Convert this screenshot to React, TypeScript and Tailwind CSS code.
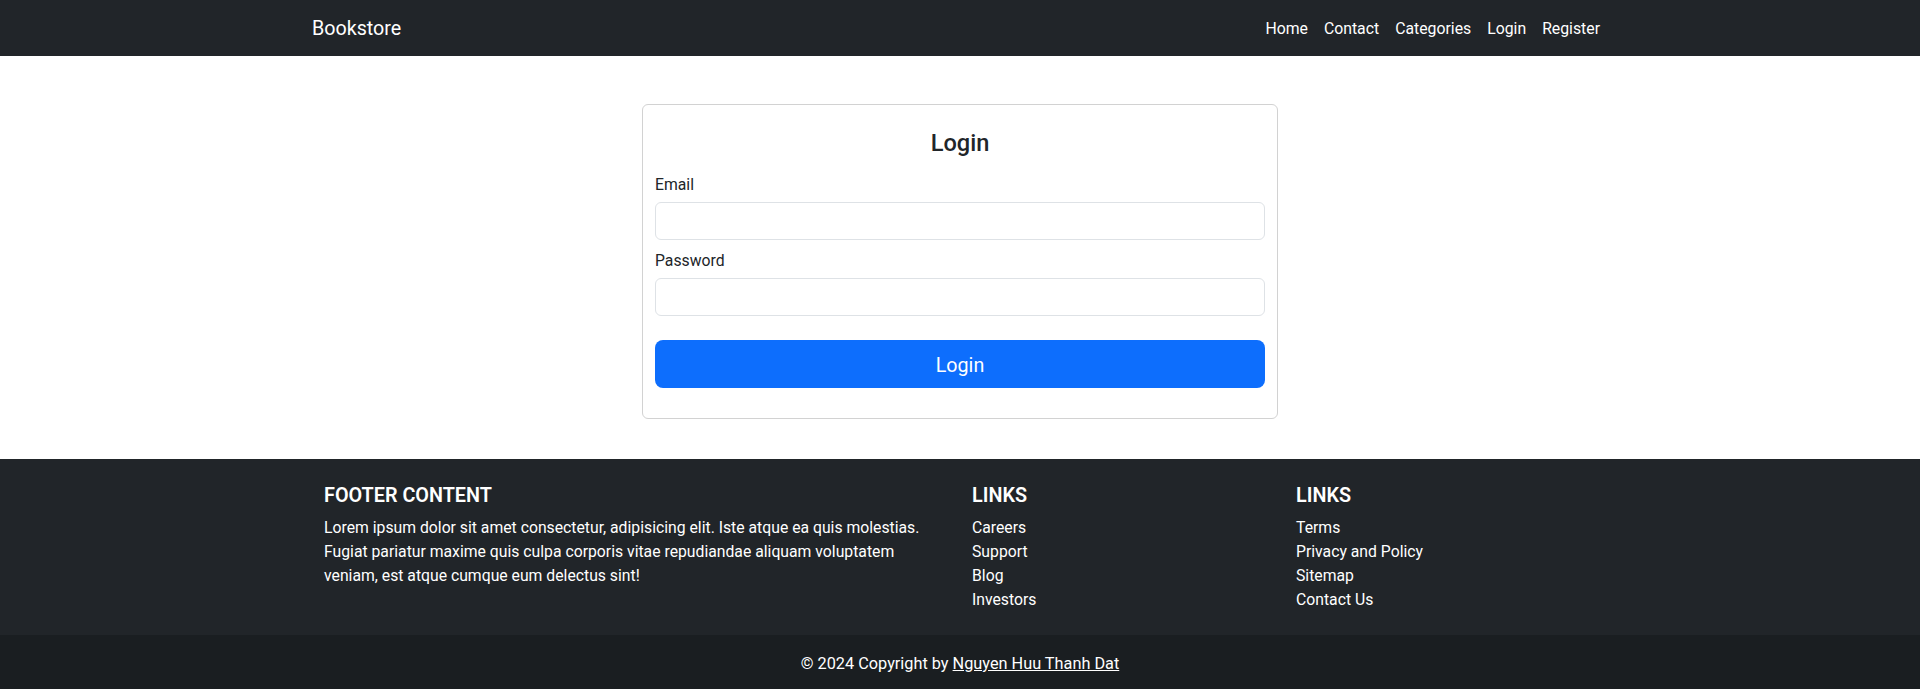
import React from "react";

const font = { fontFamily: "Roboto, 'Noto Sans', sans-serif" };

export default function App() {
  const navLinks = ["Home", "Contact", "Categories", "Login", "Register"];
  const links1 = ["Careers", "Support", "Blog", "Investors"];
  const links2 = ["Terms", "Privacy and Policy", "Sitemap", "Contact Us"];
  return (
    <div className="min-h-[689px] bg-white text-[#212529]" style={font}>
      <nav className="bg-[#212529] h-[56px]">
        <div className="w-[1320px] mx-auto px-3 pt-[2px] h-full flex items-center justify-between">
          <a className="text-white text-[19.7px] leading-[30px]">Bookstore</a>
          <ul className="flex">
            {navLinks.map((l) => (
              <li key={l}>
                <a className="block px-2 text-white text-[15.8px] leading-6">{l}</a>
              </li>
            ))}
          </ul>
        </div>
      </nav>

      <main className="w-[1320px] mx-auto px-3 pt-12 pb-10">
        <div className="mx-auto w-[636px] border border-[#d2d2d2] rounded-md px-3 pt-[24px] pb-[30px]">
          <h4 className="text-[23.6px] leading-[29px] font-medium text-center mb-[15px]">Login</h4>
          <label className="block text-[15.75px] leading-6 mb-[5px]">Email</label>
          <input
            type="email"
            className="block w-full h-[38px] border border-[#dee2e6] rounded-md px-3 outline-none"
          />
          <label className="block text-[15.75px] leading-6 mt-[9px] mb-[5px]">Password</label>
          <input
            type="password"
            className="block w-full h-[38px] border border-[#dee2e6] rounded-md px-3 outline-none"
          />
          <button className="mt-6 w-full h-[48px] pt-[4px] bg-[#0d6efd] text-white text-[19.7px] leading-[30px] rounded-lg">
            Login
          </button>
        </div>
      </main>

      <footer className="bg-[#212529] text-white">
        <div className="w-[1320px] mx-auto px-6 pt-[25px] pb-[23px]">
          <div className="flex -mx-3">
            <div className="w-1/2 px-3">
              <h5 className="text-[19.8px] leading-6 font-semibold uppercase mb-2">Footer Content</h5>
              <p className="text-[15.75px] leading-6">
                Lorem ipsum dolor sit amet consectetur, adipisicing elit. Iste atque ea quis molestias.
                <br />
                Fugiat pariatur maxime quis culpa corporis vitae repudiandae aliquam voluptatem
                <br />
                veniam, est atque cumque eum delectus sint!
              </p>
            </div>
            <div className="w-1/4 px-3">
              <h5 className="text-[19.8px] leading-6 font-semibold uppercase mb-2">Links</h5>
              <ul className="text-[15.75px] leading-6">
                {links1.map((l) => (
                  <li key={l}>
                    <a className="text-white">{l}</a>
                  </li>
                ))}
              </ul>
            </div>
            <div className="w-1/4 px-3">
              <h5 className="text-[19.8px] leading-6 font-semibold uppercase mb-2">Links</h5>
              <ul className="text-[15.75px] leading-6">
                {links2.map((l) => (
                  <li key={l}>
                    <a className="text-white">{l}</a>
                  </li>
                ))}
              </ul>
            </div>
          </div>
        </div>
        <div className="bg-[#1a1e21] text-center pt-[17px] pb-[15px] text-[16.3px] leading-6">
          © 2024 Copyright by <a className="text-white underline">Nguyen Huu Thanh Dat</a>
        </div>
      </footer>
    </div>
  );
}
